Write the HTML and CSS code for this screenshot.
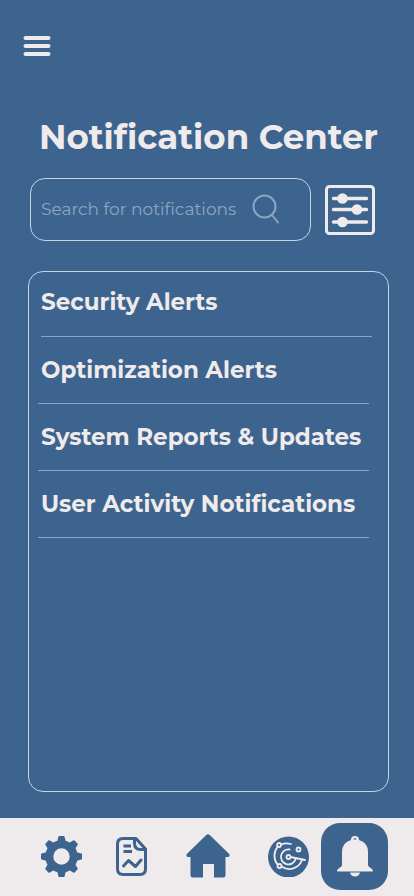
FILE: index.html
```html
<!DOCTYPE html>
<html lang="en">
<head>
  <meta charset="utf-8">
  <meta name="viewport" content="width=device-width, initial-scale=1">
  <title>Notification Center</title>
  <link rel="stylesheet" href="styles.css">
</head>
<body>
  <header class="topbar">
    <button class="icon-button" type="button" aria-label="Menu">
      <svg width="28" height="20" viewBox="0 0 28 20"><path d="M2.500 2h23M2.500 10h23M2.500 18h23" fill="none" stroke="currentColor" stroke-width="4" stroke-linecap="round"/></svg>
    </button>
  </header>

  <main class="content">
    <h1 class="title">Notification Center</h1>

    <form class="search-row" role="search">
      <div class="search">
        <input class="search-input" type="search" placeholder="Search for notifications" aria-label="Search for notifications">
        <button class="icon-button search-button" type="submit" aria-label="Search">
          <svg width="28" height="30" viewBox="0 0 28 30"><g fill="none" stroke="currentColor" stroke-width="2" stroke-linecap="round"><circle cx="12.500" cy="12.500" r="11"/><path d="M20 21l6 7.500"/></g></svg>
        </button>
      </div>
      <button class="icon-button" type="button" aria-label="Filters">
        <svg width="50" height="50" viewBox="0 0 50 50"><rect x="1.500" y="1.500" width="47" height="47" rx="3" fill="none" stroke="currentColor" stroke-width="3"/><path d="M8.500 13.500h33M8.500 24.500h33M8.500 37h33" stroke="currentColor" stroke-width="3.500" stroke-linecap="round"/><g fill="currentColor"><circle cx="17.500" cy="13.500" r="5.300"/><circle cx="32" cy="24.500" r="5.300"/><circle cx="17.500" cy="37" r="5.300"/></g></svg>
      </button>
    </form>

    <section class="panel" aria-label="Categories">
      <ul class="list">
        <li class="row row-first"><a href="#security">Security Alerts</a></li>
        <li class="row"><a href="#optimization">Optimization Alerts</a></li>
        <li class="row"><a href="#reports">System Reports &amp; Updates</a></li>
        <li class="row"><a href="#activity">User Activity Notifications</a></li>
      </ul>
    </section>
  </main>

  <nav class="tabs" aria-label="Main">
    <a href="#settings" aria-label="Settings">
      <svg width="41" height="41" viewBox="-20.500 -20.500 41 41">
        <defs><path id="tooth" d="M-4.500-14L-3-20q.3-.5 1-.5h4q.7 0 1 .5l1.500 6z"/></defs>
        <g fill="currentColor"><use href="#tooth"/><use href="#tooth" transform="rotate(45)"/><use href="#tooth" transform="rotate(90)"/><use href="#tooth" transform="rotate(135)"/><use href="#tooth" transform="rotate(180)"/><use href="#tooth" transform="rotate(225)"/><use href="#tooth" transform="rotate(270)"/><use href="#tooth" transform="rotate(315)"/></g>
        <circle r="12.200" fill="none" stroke="currentColor" stroke-width="8"/>
      </svg>
    </a>
    <a href="#documents" aria-label="Reports">
      <svg width="32" height="39" viewBox="0 0 32 39"><g fill="none" stroke="currentColor" stroke-width="3"><path d="M7 1.500h13L29.500 12v20q0 5.500-5.500 5.500H7Q1.500 37.500 1.500 32V7Q1.500 1.500 7 1.500z" stroke-linejoin="round"/><path d="M18.500 2v4q0 6.500 6 6.500h5M7.500 9H15M7.500 14.500H16"/><path d="M7.500 29l5-5.500 7 6 5.500-6.500" stroke-linecap="round" stroke-linejoin="round"/></g></svg>
    </a>
    <a href="#home" aria-label="Home">
      <svg width="44" height="44" viewBox="0 0 44 44"><path d="M20 1.200q2-1.700 4 0L43.200 20q1.200 2.500-1.200 3h-2.500v18.500q0 2-2 2H28V30H17v13.500H6.500q-2 0-2-2V23H2Q-.4 22.500.8 20z" fill="currentColor"/></svg>
    </a>
    <a href="#scan" aria-label="Scan">
      <svg width="42" height="42" viewBox="0 0 42 42"><circle cx="20.500" cy="22" r="20.500" fill="currentColor"/><g class="cutout" fill="none" stroke-width="1.800" stroke-linecap="round"><path d="M13 9.500Q17.500 7.500 23 9M9.500 12A14 14 0 0 0 9.500 29.500M13.500 31.500A13.500 13.500 0 0 0 34 25M21.500 14.500A7.500 7.500 0 1 0 27.500 24.500M22.500 22L37 25"/><circle cx="20.500" cy="22" r="2"/><circle cx="11" cy="10" r="2"/><circle cx="11.500" cy="31" r="2"/><circle cx="30.500" cy="14.500" r="2"/></g></svg>
    </a>
    <a class="tab-active" href="#notifications" aria-label="Notifications" aria-current="page">
      <svg width="38" height="41" viewBox="0 0 38 41"><g fill="currentColor"><path d="M6 29V16Q6 6.500 15 4V3.500Q15 0 19 0T23 3.500V4Q32 6.500 32 16V29Q32 30.500 36 33Q38 35.500 36 35.500H2Q0 35.500 2 33Q6 30.500 6 29z"/><path d="M14 36.500H24Q23 40.500 19 40.500T14 36.500z"/></g><path d="M17.500 3.500Q17.500 2 19 2T20.500 3.500z" class="bell-loop"/></svg>
    </a>
  </nav>
</body>
</html>
```

FILE: styles.css
```css
:root {
  --blue: #3d648e;
  --light: #efeaeb;
  --muted: #8ba6c4;
  --outline: #c5d5e6;
}

* {
  box-sizing: border-box;
}

body {
  display: flex;
  flex-direction: column;
  min-height: 100vh;
  margin: 0;
  background: var(--blue);
  color: var(--light);
  font-family: Montserrat, Inter, sans-serif;
}

svg {
  display: block;
}

.icon-button {
  padding: 0;
  border: 0;
  background: none;
  color: inherit;
}

.topbar {
  padding: 36px 23px 0;
}

.content {
  display: flex;
  flex: 1;
  flex-direction: column;
  padding: 55px 25px 26px 28px;
}

.title {
  margin: 0;
  font-size: 34px;
  font-weight: 700;
  line-height: 44px;
  text-align: center;
  white-space: nowrap;
}

.search-row {
  display: flex;
  align-items: center;
  gap: 14px;
  margin: 19px 14px 30px 2px;
}

.search {
  display: flex;
  flex: 1;
  align-items: center;
  min-width: 0;
  height: 63px;
  padding: 0 30px 2px 10px;
  border: 1px solid var(--outline);
  border-radius: 15px;
}

.search-input {
  flex: 1;
  min-width: 0;
  padding: 0;
  border: 0;
  outline: 0;
  background: none;
  color: var(--light);
  font: 400 17px/24px Montserrat, Inter, sans-serif;
}

.search-input::placeholder {
  color: var(--muted);
  opacity: 1;
}

.search-button {
  color: var(--muted);
}

.panel {
  flex: 1;
  border: 1px solid var(--outline);
  border-radius: 15px;
}

.list {
  margin: 0;
  padding: 0;
  list-style: none;
}

.row {
  height: 67px;
  margin: 0 19px 0 9px;
  padding: 0 3px;
  border-bottom: 1px solid var(--muted);
  font-size: 23px;
  font-weight: 700;
  line-height: 66px;
  white-space: nowrap;
}

.row-first {
  height: 65px;
  margin: 0 16px 0 12px;
  padding: 0;
  line-height: 60px;
}

.row a {
  color: inherit;
  text-decoration: none;
}

.tabs {
  display: grid;
  grid-template-columns: 75fr 70fr 82fr 53fr 67px;
  align-items: center;
  height: 78px;
  padding: 0 26px 2px 41px;
  background: var(--light);
}

.tabs a {
  color: var(--blue);
}

.tabs .tab-active {
  display: grid;
  place-items: center;
  height: 67px;
  border-radius: 19px;
  background: var(--blue);
  color: var(--light);
}

.cutout {
  stroke: var(--light);
}

.bell-loop {
  fill: var(--blue);
}
```
